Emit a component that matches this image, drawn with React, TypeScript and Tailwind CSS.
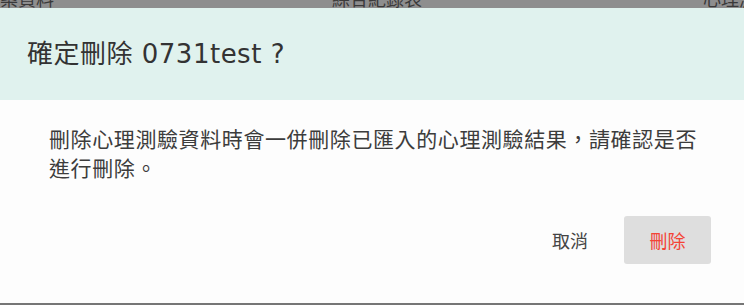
const fontStack =
  "font-['DejaVu_Sans','Noto_Sans_CJK_TC','Noto_Sans_CJK_SC',sans-serif]"

function Backdrop() {
  // dimmed table header peeking out above the dialog
  return (
    <div className="h-[8px] overflow-hidden bg-[#8e8e8e]">
      <div className="-mt-[11px] flex whitespace-nowrap text-[18px] leading-[18px] text-[#3a3a3a] font-['Noto_Sans_CJK_TC',sans-serif]">
        <span className="w-[332px] shrink-0">案資料</span>
        <span className="w-[371px] shrink-0">綜合紀錄表</span>
        <span className="shrink-0">心理測驗</span>
      </div>
    </div>
  )
}

function ConfirmDialog() {
  return (
    <div className="flex flex-col bg-[#fdfdfd]">
      {/* Header */}
      <div className="flex h-[92px] items-center bg-[#e0f2ee] pl-[27px]">
        <h2
          className={`${fontStack} text-[26px] leading-none tracking-[0.5px] text-[#333333]`}
        >
          確定刪除 0731test ?
        </h2>
      </div>

      {/* Body */}
      <div className="pl-[49px] pr-[40px] pt-[24px]">
        <p className="font-['Noto_Sans_CJK_TC',sans-serif] text-[21px] leading-[29px] tracking-[0.6px] text-[#3c3c3c]">
          刪除心理測驗資料時會一併刪除已匯入的心理測驗結果，請確認是否進行刪除。
        </p>
      </div>

      {/* Actions */}
      <div className="flex items-center justify-end gap-[20px] pb-[39px] pr-[33px] pt-[34px] font-['Noto_Sans_CJK_TC',sans-serif]">
        <button
          type="button"
          className="h-[48px] px-[16px] text-[18px] text-[#444444]"
        >
          取消
        </button>
        <button
          type="button"
          className="h-[48px] w-[87px] rounded-[3px] bg-[#dedede] text-[18px] text-[#f44336]"
        >
          刪除
        </button>
      </div>
    </div>
  )
}

export default function App() {
  return (
    <div className="flex h-[305px] w-[744px] flex-col overflow-hidden bg-[#767676]">
      <Backdrop />
      <ConfirmDialog />
    </div>
  )
}
